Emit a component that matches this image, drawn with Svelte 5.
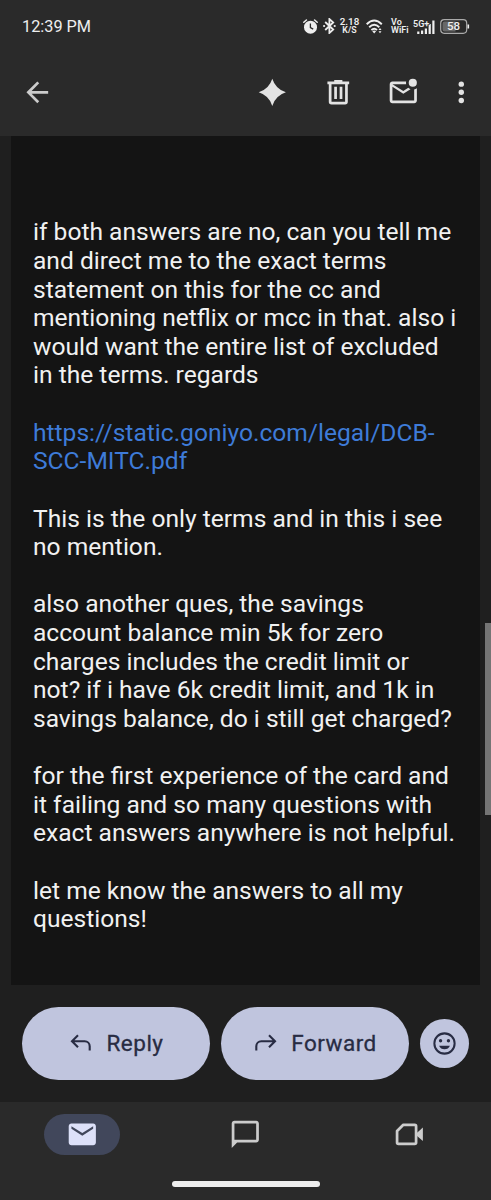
<script>
  const message = [
    ['if both answers are no, can you tell me', 'and direct me to the exact terms', 'statement on this for the cc and', 'mentioning netflix or mcc in that. also i', 'would want the entire list of excluded', 'in the terms. regards'],
    ['https://static.goniyo.com/legal/DCB-', 'SCC-MITC.pdf'],
    ['This is the only terms and in this i see', 'no mention.'],
    ['also another ques, the savings', 'account balance min 5k for zero', 'charges includes the credit limit or', 'not? if i have 6k credit limit, and 1k in', 'savings balance, do i still get charged?'],
    ['for the first experience of the card and', 'it failing and so many questions with', 'exact answers anywhere is not helpful.'],
    ['let me know the answers to all my', 'questions!']
  ];
  const isLink = (lines) => lines[0].startsWith('https://');
</script>

<div class="screen">
  <header>
    <div class="status">
      <span class="clock">12:39 PM</span>
      <svg class="alarm" width="15" height="15" viewBox="0 0 15 15">
        <circle cx="7.5" cy="8.2" r="6.5" fill="#eee" />
        <path d="M.8 3.3 3.4 1M14.2 3.3 11.6 1" stroke="#eee" stroke-width="1.5" stroke-linecap="round" />
        <path d="M7.4 4.5v4l2.8 1.6" fill="none" stroke="#2a2a2a" stroke-width="1.3" />
      </svg>
      <svg class="bt" width="13" height="16" viewBox="0 0 13 16">
        <path d="m2.2 4 8 7.6L6.4 15V1l3.8 3.4-8 7.6" fill="none" stroke="#eee" stroke-width="1.8" />
        <circle cx="1.1" cy="8" r="1.1" fill="#eee" /><circle cx="11.7" cy="8" r="1.1" fill="#eee" />
      </svg>
      <div class="tiny speed"><span>2.18</span><span class="unit">K/S</span></div>
      <svg class="wifi" width="17" height="15" viewBox="0 0 17 15">
        <g fill="none" stroke="#eee" stroke-width="1.9">
          <path d="M.7 5.2Q8.2-2 15.8 5.2" /><path d="M3.2 8.2Q8.2 3.4 13.3 8.2" /><path d="M5.4 11Q8.2 8.4 11 11" />
        </g>
        <path d="M6.3 12.2Q8.2 11 10.1 12.2L8.2 14.4Z" fill="#eee" />
        <path d="m14 9 1.5 2h-3zM14 14.3l1.5-2h-3z" fill="#eee" />
      </svg>
      <div class="tiny vowifi"><span>Vo</span><span>WiFi</span></div>
      <svg class="signal" width="22" height="15" viewBox="0 0 22 15">
        <path d="M4.2 12.5h2.2V15H4.200zM8 11.500h2.200V15H8zM11.800 9.500H14V15h-2.200zM15.600 5h2.200v10h-2.200zM19.300 1.500h2.200V15h-2.200z" fill="#eee" />
        <text x="0" y="7.5">5G+</text>
      </svg>
      <svg class="battery" width="30" height="15" viewBox="0 0 30 15">
        <rect x=".7" y=".7" width="26" height="13.6" rx="3.5" fill="#2a2a2a" stroke="#aaa" stroke-width="1.2" />
        <path d="M4.5 2.5h11v10h-11a2 2 0 0 1-2-2v-6a2 2 0 0 1 2-2z" fill="#686868" />
        <path d="M28.3 5.5v4" stroke="#eee" stroke-width="1.6" />
        <text class="level" x="13.5" y="11.4" text-anchor="middle">58</text>
      </svg>
    </div>
    <div class="toolbar">
      <svg class="icon back" viewBox="0 0 24 24"><path d="M20 11H7.83l5.59-5.59L12 4l-8 8 8 8 1.41-1.41L7.83 13H20z" /></svg>
      <svg class="icon" viewBox="0 0 24 24"><path d="M12 2Q14.4 9.6 22 12 14.4 14.4 12 22 9.6 14.4 2 12 9.6 9.6 12 2Z" /></svg>
      <svg class="icon" viewBox="0 0 24 24">
        <path d="M9 3v1H4v2h1v13a2 2 0 0 0 2 2h10a2 2 0 0 0 2-2V6h1V4h-5V3zM7 6h10v13H7zM9 8v9h2V8zM13 8v9h2V8z" fill-rule="evenodd" />
      </svg>
      <svg class="icon" viewBox="0 0 24 24">
        <path d="M22 8.98V18c0 1.1-.9 2-2 2H4c-1.1 0-2-.9-2-2V6c0-1.1.9-2 2-2h10.1a5 5 0 0 0 0 2H4l8 5 3.67-2.29c.47.43 1.02.76 1.63.98L12 13 4 8v10h16V9.9c.74-.15 1.42-.48 2-.92z" />
        <circle cx="19" cy="5" r="3" />
      </svg>
      <svg class="icon more" viewBox="0 0 24 24"><circle cx="12" cy="6" r="2" /><circle cx="12" cy="12" r="2" /><circle cx="12" cy="18" r="2" /></svg>
    </div>
  </header>

  <main>
    <article>
      {#each message as lines}
        <p>
          {#if isLink(lines)}
            <span class="link">{lines.join('\n')}</span>
          {:else}
            <span>{lines.join('\n')}</span>
          {/if}
        </p>
      {/each}
    </article>
    <div class="scrollbar"></div>
  </main>

  <div class="actions">
    <button class="pill">
      <svg width="22" height="18" viewBox="0 0 22 18"><path d="M8 1.2 2 7.2l6 6M2.3 7.2h12.4a5 5 0 0 1 5 5v4.3" /></svg>
      Reply
    </button>
    <button class="pill">
      <svg width="22" height="18" viewBox="0 0 22 18"><path d="m14 1.2 6 6-6 6M19.7 7.2H6.3a5 5 0 0 0-5 5v4.3" /></svg>
      Forward
    </button>
    <button class="emoji" aria-label="Add reaction">
      <svg width="27" height="27" viewBox="0 0 24 24">
        <circle cx="12" cy="12" r="9" fill="none" stroke="#282c43" stroke-width="1.8" />
        <circle cx="8.5" cy="9.5" r="1.5" /><circle cx="15.5" cy="9.5" r="1.5" />
        <path d="M7.2 14h9.6c-.8 2-2.6 3.2-4.8 3.2S8 16 7.2 14z" />
      </svg>
    </button>
  </div>

  <nav>
    <div class="tabs">
      <div class="tab">
        <div class="active">
          <svg class="icon" viewBox="0 0 24 24"><path d="M20 4H4c-1.1 0-2 .9-2 2v12c0 1.1.9 2 2 2h16c1.1 0 2-.9 2-2V6c0-1.1-.9-2-2-2zm0 4-8 5-8-5V6l8 5 8-5z" /></svg>
        </div>
      </div>
      <div class="tab">
        <svg class="icon" viewBox="0 0 24 24"><path d="M20 2H4c-1.1 0-2 .9-2 2v18l4-4h14c1.1 0 2-.9 2-2V4c0-1.1-.9-2-2-2zm0 14H4V4h16z" /></svg>
      </div>
      <div class="tab">
        <svg class="icon" viewBox="0 0 24 24">
          <path d="M7.6 5H16a1 1 0 0 1 1 1v12a1 1 0 0 1-1 1H4a1 1 0 0 1-1-1V9.6z" fill="none" stroke="#ccc" stroke-width="2" stroke-linejoin="round" />
          <path d="M17.5 11 22 7v10L17.5 13z" />
        </svg>
      </div>
    </div>
    <div class="home"></div>
  </nav>
</div>

<style>
  :global(body) { background: #1f1f1f; }
  .screen {
    width: 491px; height: 1200px; display: flex; flex-direction: column;
    overflow: hidden; background: #1f1f1f; font-family: Roboto, sans-serif;
  }
  svg { display: block; flex: none; }
  header { height: 136px; flex: none; background: #2a2a2a; }
  .status { display: flex; align-items: center; height: 52px; padding-left: 22px; box-sizing: border-box; }
  .clock { width: 280.5px; padding-top: 2px; font-size: 16.3px; line-height: 20px; color: #eee; }
  .bt { margin-left: 5px; }
  .tiny {
    display: flex; flex-direction: column; align-items: center; flex: none;
    font-size: 9.8px; line-height: 8px; font-weight: 600; color: #eee;
  }
  .speed { width: 20px; margin-left: 4px; }
  .unit { font-size: 8.8px; }
  .wifi { margin-left: 6px; }
  .vowifi { width: 18px; margin-left: 8.5px; align-items: flex-start; white-space: nowrap; font-size: 9px; }
  .signal { margin-left: 3.5px; overflow: visible; }
  .signal text { font-size: 9px; font-weight: 600; fill: #eee; stroke: #2a2a2a; stroke-width: 1.5px; paint-order: stroke; }
  .battery { margin-left: 5px; }
  .level { font-size: 11.5px; font-weight: 500; fill: #eee; }
  .icon { width: 32.6px; height: 32.6px; fill: #e3e3e3; }
  .toolbar { display: flex; align-items: center; gap: 33px; height: 81px; padding-left: 21px; }
  .back { margin-right: 169.6px; fill: #ccc; }
  .more { margin-left: -8.3px; }

  main { position: relative; height: 849px; flex: none; padding: 0 11px; }
  article { height: 100%; box-sizing: border-box; padding: 82.3px 22px 0; background: #141414; }
  p { margin: 0 0 28.62px; font-size: 24.58px; line-height: 28.62px; color: #f1f1f1; }
  p span { display: block; white-space: pre; }
  .link { color: #3e7bd8; }
  .scrollbar { position: absolute; right: 0; top: 487px; width: 6px; height: 192px; background: #757575; }

  .actions { display: flex; align-items: center; gap: 11px; height: 117px; flex: none; padding-left: 22px; }
  button { border: 0; padding: 0; display: flex; align-items: center; justify-content: center; background: #c0c5de; }
  .pill {
    width: 188px; height: 73px; border-radius: 37px; gap: 14px; padding-left: 2px; padding-bottom: 1px;
    font-family: Roboto, sans-serif; font-size: 22.5px; font-weight: 400; letter-spacing: 0.5px; color: #282c43;
    -webkit-text-stroke: 0.3px #282c43;
  }
  .pill path { fill: none; stroke: #282c43; stroke-width: 2.1; }
  .emoji { width: 49px; height: 49px; border-radius: 50%; fill: #282c43; }

  nav { height: 98px; flex: none; background: #2a2a2a; display: flex; flex-direction: column; align-items: center; }
  .tabs { display: grid; grid-template-columns: repeat(3, 1fr); width: 491px; height: 65px; }
  .tab { display: flex; align-items: center; justify-content: center; }
  .tab .icon { fill: #ccc; }
  .active { display: flex; align-items: center; justify-content: center; width: 76px; height: 41px; border-radius: 21px; background: #41475b; }
  .tab .active .icon { fill: #dde1f9; }
  .home { width: 148px; height: 6px; margin-top: 14px; border-radius: 3px; background: #eee; }
</style>
